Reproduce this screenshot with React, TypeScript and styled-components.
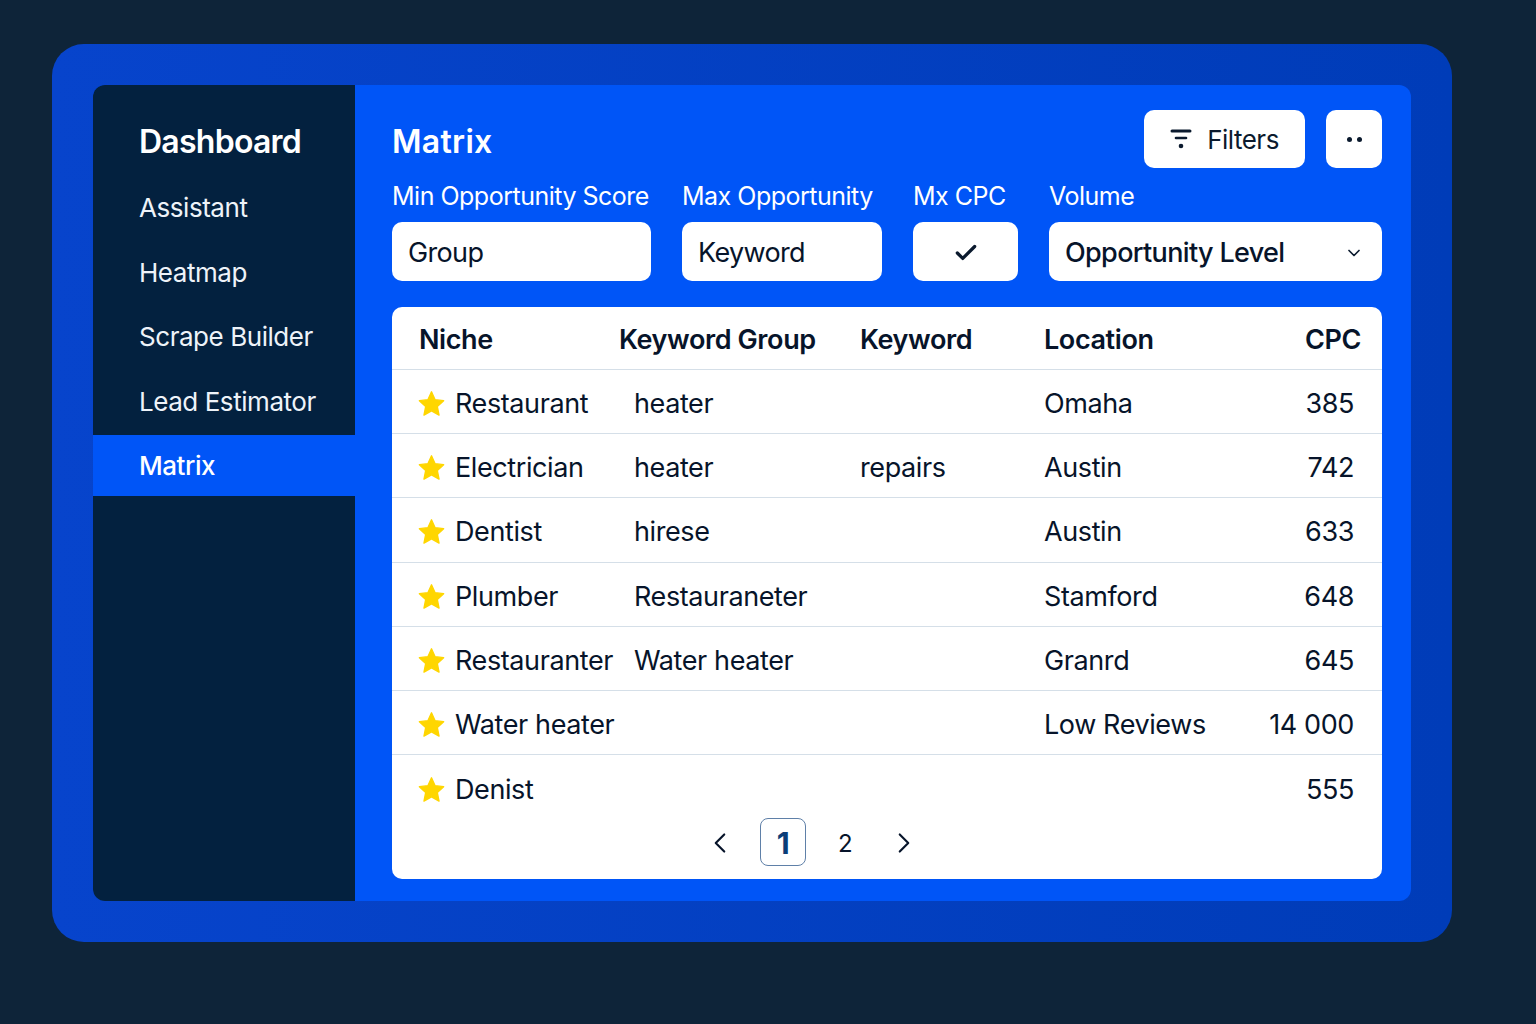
import React from "react"
import styled, { createGlobalStyle } from "styled-components"
import { Check, ChevronDown, ChevronLeft, ChevronRight } from "lucide-react"

const GlobalStyle = createGlobalStyle`
  html, body {
    margin: 0;
    background: #0e2439;
    font-family: Inter, "Liberation Sans", sans-serif;
  }
`

interface Lead {
  niche: string
  group?: string
  keyword?: string
  location?: string
  cpc: string
}

const navItems = ["Assistant", "Heatmap", "Scrape Builder", "Lead Estimator", "Matrix"]

const leads: Lead[] = [
  { niche: "Restaurant", group: "heater", location: "Omaha", cpc: "385" },
  { niche: "Electrician", group: "heater", keyword: "repairs", location: "Austin", cpc: "742" },
  { niche: "Dentist", group: "hirese", location: "Austin", cpc: "633" },
  { niche: "Plumber", group: "Restauraneter", location: "Stamford", cpc: "648" },
  { niche: "Restauranter", group: "Water heater", location: "Granrd", cpc: "645" },
  { niche: "Water heater", location: "Low Reviews", cpc: "14 000" },
  { niche: "Denist", cpc: "555" },
]

const StarIcon = (): JSX.Element => (
  <StarSvg viewBox="0 0 24 24">
    <path
      d="M12 1.6l3.2 7 7.6.9-5.6 5.2 1.5 7.6L12 18.5l-6.7 3.8 1.5-7.6L1.2 9.5l7.6-.9z"
      fill="#ffd600"
      stroke="#ffd600"
      strokeWidth="1.2"
      strokeLinejoin="round"
    />
  </StarSvg>
)

const FunnelIcon = (): JSX.Element => (
  <svg width="22" height="20" viewBox="0 0 22 20" fill="none" stroke="#0b1a2e" strokeLinecap="round">
    <path d="M2 2h18" strokeWidth="3" />
    <path d="M6 9h10" strokeWidth="2.6" />
    <circle cx="11" cy="17" r="2.3" fill="#0b1a2e" stroke="none" />
  </svg>
)

const App = (): JSX.Element => (
  <>
    <GlobalStyle />
    <Page>
      <Frame>
        <Shell>
          <Sidebar>
            <Brand>Dashboard</Brand>
            <Nav>
              {navItems.map(item => (
                <NavItem key={item} $active={item === "Matrix"}>
                  {item}
                </NavItem>
              ))}
            </Nav>
          </Sidebar>
          <Main>
            <TopBar>
              <Title>Matrix</Title>
              <FilterButton>
                <FunnelIcon />
                Filters
              </FilterButton>
              <MoreButton>
                <Dot />
                <Dot />
              </MoreButton>
            </TopBar>
            <FilterRow>
              <Field>
                <FieldLabel>Min Opportunity Score</FieldLabel>
                <Input>Group</Input>
              </Field>
              <Field>
                <FieldLabel>Max Opportunity</FieldLabel>
                <Input>Keyword</Input>
              </Field>
              <Field>
                <FieldLabel>Mx CPC</FieldLabel>
                <CheckBox>
                  <Check size={26} strokeWidth={3} color="#0b1a2e" />
                </CheckBox>
              </Field>
              <Field>
                <FieldLabel>Volume</FieldLabel>
                <Select>
                  Opportunity Level
                  <ChevronDown size={20} strokeWidth={2} color="#0b1a2e" />
                </Select>
              </Field>
            </FilterRow>
            <TableCard>
              <HeadRow>
                <span>Niche</span>
                <span>Keyword Group</span>
                <span>Keyword</span>
                <span>Location</span>
                <HeadCpc>CPC</HeadCpc>
              </HeadRow>
              {leads.map(lead => (
                <Row key={lead.niche}>
                  <NicheCell>
                    <StarIcon />
                    {lead.niche}
                  </NicheCell>
                  <span>{lead.group}</span>
                  <span>{lead.keyword}</span>
                  <span>{lead.location}</span>
                  <CpcCell>{lead.cpc}</CpcCell>
                </Row>
              ))}
              <Pagination>
                <PageArrow>
                  <ChevronLeft size={34} strokeWidth={1.5} />
                </PageArrow>
                <PageNumber $active>1</PageNumber>
                <PageNumber>2</PageNumber>
                <PageArrow $narrow>
                  <ChevronRight size={34} strokeWidth={1.5} />
                </PageArrow>
              </Pagination>
            </TableCard>
          </Main>
        </Shell>
      </Frame>
    </Page>
  </>
)

const Page = styled.div`
  width: 1536px;
  height: 1024px;
  box-sizing: border-box;
  padding: 44px 84px 82px 52px;
  overflow: hidden;
`

const Frame = styled.div`
  height: 100%;
  box-sizing: border-box;
  padding: 41px;
  border-radius: 32px;
  background: linear-gradient(90deg, #0744cc 0%, #003cb8 100%);
`

const Shell = styled.div`
  display: flex;
  height: 100%;
  border-radius: 12px;
  overflow: hidden;
  background: #0055f7;
`

const Sidebar = styled.aside`
  width: 262px;
  flex-shrink: 0;
  background: #03213f;
  color: #fff;
`

const Brand = styled.h1`
  margin: 0;
  padding: 37px 0 0 46px;
  font-size: 32px;
  line-height: 39px;
  font-weight: 600;
  letter-spacing: -0.75px;
`

const Nav = styled.nav`
  display: flex;
  flex-direction: column;
  gap: 3.5px;
  margin-top: 16px;
`

const NavItem = styled.div<{ $active?: boolean }>`
  height: 61px;
  padding-left: 46px;
  display: flex;
  align-items: center;
  font-size: 26px;
  letter-spacing: -0.45px;
  font-weight: ${(props): number => (props.$active ? 500 : 400)};
  color: ${(props): string => (props.$active ? "#fff" : "#eef3f9")};
  background: ${(props): string => (props.$active ? "#0055f7" : "transparent")};
`

const Main = styled.main`
  flex: 1;
  box-sizing: border-box;
  padding: 25px 29px 22px 37px;
  display: flex;
  flex-direction: column;
`

const TopBar = styled.div`
  display: flex;
  align-items: center;
  gap: 21px;
  height: 58px;
`

const Title = styled.h2`
  margin: 0 auto 0 0;
  padding-top: 4px;
  font-size: 32px;
  font-weight: 600;
  color: #fff;
  letter-spacing: 0.3px;
`

const WhiteButton = styled.button`
  height: 58px;
  border: none;
  border-radius: 10px;
  background: #fff;
  display: flex;
  align-items: center;
  justify-content: center;
  padding: 0;
`

const FilterButton = styled(WhiteButton)`
  width: 161px;
  gap: 15px;
  font-family: inherit;
  font-size: 26px;
  letter-spacing: -0.5px;
  color: #0b1a2e;
`

const MoreButton = styled(WhiteButton)`
  width: 56px;
  gap: 5px;
`

const Dot = styled.i`
  width: 5px;
  height: 5px;
  border-radius: 50%;
  background: #0b1a2e;
`

const FilterRow = styled.div`
  display: grid;
  grid-template-columns: 259px 200px 105px 333px;
  column-gap: 31px;
  margin-top: 12px;
`

const Field = styled.div`
  display: flex;
  flex-direction: column;
  gap: 10px;
  white-space: nowrap;
`

const FieldLabel = styled.label`
  font-size: 25px;
  line-height: 32px;
  color: #fff;
  letter-spacing: -0.5px;
`

const Input = styled.div`
  height: 59px;
  box-sizing: border-box;
  padding: 2px 16px 0;
  display: flex;
  align-items: center;
  border-radius: 10px;
  background: #fff;
  font-size: 27px;
  letter-spacing: -0.65px;
  color: #07142a;
`

const CheckBox = styled(Input)`
  justify-content: center;
  padding: 2px 0 0;
`

const Select = styled(Input)`
  justify-content: space-between;
  font-weight: 500;
  padding-right: 18px;
`

const TableCard = styled.section`
  margin-top: 26px;
  flex: 1;
  border-radius: 10px;
  background: #fff;
  color: #07142a;
  font-size: 27px;
  letter-spacing: -0.4px;
`

const HeadRow = styled.div`
  height: 63px;
  box-sizing: border-box;
  padding: 2px 21px 0 27px;
  display: grid;
  grid-template-columns: 200px 241px 184px 1fr 70px;
  align-items: center;
  border-bottom: 1px solid #d5dfe8;
  font-weight: 600;
`

const HeadCpc = styled.span`
  text-align: right;
`

const Row = styled.div`
  height: 64.2px;
  box-sizing: border-box;
  padding: 4px 28px 0 26px;
  display: grid;
  grid-template-columns: 216px 226px 184px 1fr 90px;
  align-items: center;
  white-space: nowrap;
  border-bottom: 1px solid #d5dfe8;

  &:last-of-type {
    border-bottom: none;
  }
`

const NicheCell = styled.span`
  display: flex;
  align-items: center;
  gap: 10px;
`

const StarSvg = styled.svg`
  width: 27px;
  height: 27px;
  flex-shrink: 0;
`

const CpcCell = styled.span`
  text-align: right;
`

const Pagination = styled.nav`
  display: flex;
  align-items: center;
  margin-top: -1.3px;
  padding-left: 304px;
  gap: 16px;
`

const PageArrow = styled.span<{ $narrow?: boolean }>`
  width: ${(props): string => (props.$narrow ? "40px" : "48px")};
  padding-top: 2px;
  display: flex;
  justify-content: center;
  color: #07142a;
`

const PageNumber = styled.span<{ $active?: boolean }>`
  width: 46px;
  height: 48px;
  box-sizing: border-box;
  padding-top: 2px;
  display: flex;
  align-items: center;
  justify-content: center;
  border-radius: 8px;
  border: ${(props): string => (props.$active ? "1px solid #5f80a8" : "1px solid transparent")};
  font-size: ${(props): string => (props.$active ? "30px" : "24px")};
  font-weight: ${(props): number => (props.$active ? 700 : 400)};
  color: ${(props): string => (props.$active ? "#0b3d78" : "#07142a")};
`

export default App
